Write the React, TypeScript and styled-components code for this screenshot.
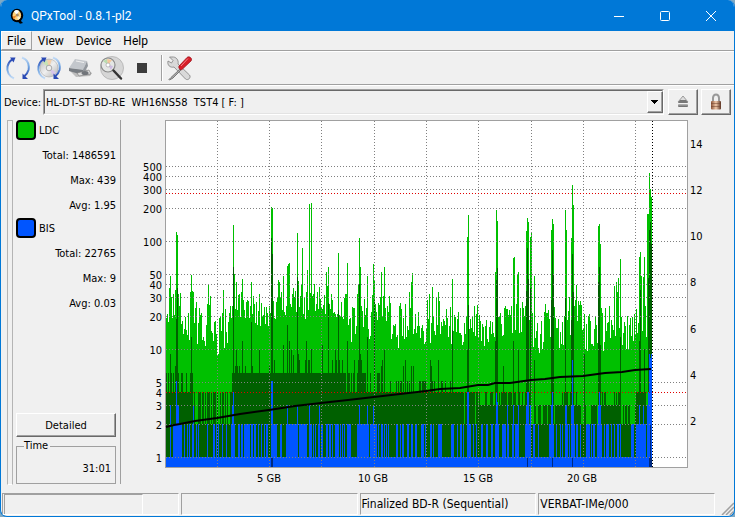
import React from "react";
import styled, { createGlobalStyle } from "styled-components";

const GlobalStyle = createGlobalStyle`
  * { box-sizing: border-box; }
  html, body { margin: 0; padding: 0; }
  body { background: #7fa9c4; font-family: "DejaVu Sans Condensed", "DejaVu Sans", sans-serif; font-size: 11px; color: #000; }
  button, select { font: inherit; color: inherit; }
`;

const Window = styled.div`
  display: flex;
  flex-direction: column;
  min-height: 100vh;
  background: #f0f0f0;
  border: 1px solid #0078d7;
  border-top: 0;
  border-radius: 7px;
  overflow: hidden;
`;

const TitleBar = styled.header`
  display: flex;
  align-items: center;
  height: 31px;
  padding-left: 7px;
  background: #0078d7;
  color: #fff;
`;

const Title = styled.h1`
  flex: 1;
  margin: 0 0 0 5px;
  font: 400 12px/16px Roboto, sans-serif;
`;

const CaptionButton = styled.button`
  display: grid;
  place-items: center;
  width: 46px;
  height: 30px;
  padding: 0;
  border: 0;
  background: transparent;
  color: #fff;
`;

const MenuBar = styled.nav`
  display: flex;
  height: 21px;
  border-bottom: 1px solid #fff;
  box-shadow: inset 0 -1px #a0a0a0;
`;

const MenuItem = styled.button<{ $active?: boolean }>`
  height: 19px;
  padding: 0 5px;
  border: 1px solid transparent;
  border-color: ${(p) => (p.$active ? "#fff #a0a0a0 #a0a0a0 #fff" : "transparent")};
  background: transparent;
  font: 12px/16px Roboto, sans-serif;
`;

const ToolBar = styled.div`
  display: flex;
  align-items: center;
  height: 33px;
  gap: 3px;
  padding: 0 3px;
  border-bottom: 1px solid #a0a0a0;
`;

const ToolButton = styled.button`
  display: grid;
  place-items: center;
  width: 28px;
  height: 28px;
  padding: 0;
  border: 0;
  background: transparent;
`;

const Separator = styled.span`
  width: 2px;
  height: 26px;
  margin-left: 2px;
  background: #a0a0a0;
  border-right: 1px solid #fff;
`;

const DeviceRow = styled.div`
  display: flex;
  height: 34px;
  padding: 3px 3px 4px;
  align-items: stretch;
  gap: 3px;
  border-top: 1px solid #fff;
`;

const DeviceLabel = styled.label`
  width: 36px;
  align-self: center;
  white-space: nowrap;
`;

const SelectFrame = styled.div`
  position: relative;
  flex: 1;
  min-width: 0;
  margin-right: 1px;
  border: 1px solid #a0a0a0;
  border-right-color: #fff;
  border-bottom-color: #fff;
`;

const DeviceSelect = styled.select`
  width: 100%;
  height: 100%;
  appearance: none;
  border: 1px solid #696969;
  border-right-color: #e3e3e3;
  border-bottom-color: #e3e3e3;
  border-radius: 0;
  padding: 0 20px 0 1px;
  background: #f0f0f0;
`;

const DropArrow = styled.span`
  position: absolute;
  right: 0;
  top: 1px;
  bottom: 1px;
  width: 16px;
  display: grid;
  place-items: center;
  pointer-events: none;
  background: #f0f0f0;
  border: 1px solid #fff;
  border-right-color: #696969;
  border-bottom-color: #696969;
  box-shadow: inset -1px -1px #a0a0a0;
`;

const RaisedButton = styled.button<{ $width?: number }>`
  display: grid;
  place-items: center;
  width: ${(p) => (p.$width ? p.$width + "px" : "100%")};
  min-height: 24px;
  padding: 0;
  border: 1px solid #fff;
  border-right-color: #696969;
  border-bottom-color: #696969;
  box-shadow: inset -1px -1px #a0a0a0;
  background: #f0f0f0;
`;

const Main = styled.main`
  display: flex;
  flex: 1;
  min-height: 0;
`;

const Splitter = styled.div`
  width: 6px;
  margin: 1px 3px 2px 6px;
  border: 1px solid #b4b4b4;
  border-bottom-color: #fff;
`;

const SidePanel = styled.aside`
  display: flex;
  flex-direction: column;
  width: 105px;
  padding-right: 4px;
  margin: 1px 0 3px;
  border-right: 1px solid #a0a0a0;
`;

const Legend = styled.h2`
  display: flex;
  align-items: center;
  gap: 3px;
  height: 23px;
  margin: 0;
  padding-bottom: 3px;
  font-size: 11px;
  font-weight: 400;
`;

const Swatch = styled.span<{ $color: string }>`
  width: 20px;
  height: 20px;
  border: 2px solid #000;
  border-radius: 4px;
  background: ${(p) => p.$color};
`;

const Stat = styled.div`
  height: 25px;
  line-height: 25px;
  text-align: right;
`;

const Spacer = styled.div`
  flex: 1;
`;

const TimeBox = styled.fieldset`
  height: 45px;
  margin: 2px 0 0;
  padding: 9px 4px 0 7px;
  border: 1px solid #a0a0a0;

  legend {
    padding: 0 2px 0 0;
    line-height: 14px;
  }
`;

const TimeValue = styled.div`
  text-align: right;
`;

const ChartArea = styled.section`
  flex: 1;
  min-width: 0;
  display: flex;

  svg {
    display: block;
    width: 100%;
    height: 100%;
  }
`;

const StatusBar = styled.footer`
  display: grid;
  grid-template-columns: repeat(4, 1fr) 17px;
  column-gap: 2px;
  height: 29px;
  padding: 6px 0 1px 1px;
  font-size: 12px;
`;

const StatusCell = styled.div`
  display: flex;
  align-items: center;
  min-width: 0;
  padding-left: 1px;
  white-space: nowrap;
  border: 1px solid #a0a0a0;
  border-right-color: #fff;
  border-bottom-color: #fff;
`;

const StatusProgress = styled.div`
  align-self: stretch;
  width: 80%;
  border: 1px solid #a0a0a0;
  border-right-color: #fff;
  border-bottom: 0;
`;

const Grip = styled.svg`
  align-self: end;
  justify-self: end;
`;

/* ---------- chart data ---------- */

const LEFT = 166;
const END = 652;
const BOTTOM = 467;
const yOf = (v: number) => Math.round(457 - 108 * Math.log10(v));

type Peaks = Record<number, number>;

const ldcPeaks: Peaks = {
  169: 288, 170: 276, 175: 290, 176: 232, 177: 235, 178: 294, 190: 292, 191: 275, 208: 285, 223: 290,
  233: 225, 234: 274, 236: 282, 239: 294, 241: 292, 242: 279, 251: 282, 259: 294, 271: 207, 272: 208,
  278: 280, 279: 282, 281: 292, 283: 276, 287: 266, 288: 264, 289: 263, 293: 288, 295: 291, 297: 233,
  298: 281, 301: 285, 302: 248, 306: 292, 307: 270, 309: 204, 311: 203, 313: 294, 314: 284, 319: 287,
  326: 272, 327: 286, 328: 267, 338: 253, 347: 263, 357: 294, 358: 284, 359: 238, 360: 267, 367: 276,
  373: 264, 374: 281, 381: 272, 384: 267, 409: 292, 411: 282, 412: 273, 432: 287, 438: 292, 452: 279,
  467: 237, 468: 215, 495: 272, 496: 210, 497: 221, 513: 258, 514: 257, 517: 274, 518: 272, 526: 231,
  527: 218, 528: 222, 530: 237, 531: 233, 534: 276, 551: 230, 552: 219, 553: 224, 565: 210, 566: 230,
  571: 238, 572: 185, 573: 205, 576: 285, 598: 226, 599: 224, 600: 244, 614: 286, 616: 282, 617: 292,
  618: 278, 620: 259, 639: 257, 640: 252, 641: 276, 643: 277, 644: 257, 648: 214, 649: 173, 650: 189,
  651: 197,
};

const darkPeaks: Peaks = {
  170: 354, 175: 366, 176: 319, 177: 288, 191: 337, 233: 267, 236: 350, 242: 341, 251: 322, 259: 350,
  271: 238, 272: 254, 283: 345, 287: 325, 289: 341, 291: 350, 293: 355, 297: 277, 298: 354, 306: 341,
  311: 349, 322: 345, 328: 303, 338: 310, 335: 350, 347: 341, 336: 360, 354: 360, 358: 360, 359: 284, 360: 354, 361: 360,
  367: 337, 374: 300, 381: 366, 382: 360, 384: 350, 403: 366, 405: 360, 411: 366, 413: 366, 430: 360, 431: 366, 438: 360,
  452: 330, 467: 350, 468: 305, 495: 341, 496: 280, 497: 268, 503: 366, 513: 341, 518: 350, 526: 291,
  527: 248, 528: 279, 530: 288, 534: 360, 551: 300, 552: 250, 553: 275, 565: 298, 571: 320, 572: 254, 573: 292,
  584: 354, 598: 282, 599: 267, 600: 345, 620: 337, 639: 341, 640: 290, 644: 349, 648: 278, 649: 230, 650: 222, 651: 244,
};

const bisPeaks: Peaks = {
  170: 405, 176: 381, 177: 405, 178: 405, 193: 405, 232: 405, 233: 392, 271: 381, 272: 381, 287: 405,
  297: 405, 309: 405, 319: 405, 359: 405, 367: 405, 373: 405, 467: 392, 468: 392, 496: 392, 497: 402,
  507: 405, 513: 405, 518: 405, 526: 405, 527: 392, 528: 392, 530: 405, 551: 405, 552: 392, 565: 405, 566: 405,
  571: 405, 572: 360, 573: 405, 598: 405, 599: 392, 600: 405, 639: 405, 643: 405, 647: 405, 648: 392,
  649: 354, 650: 358, 651: 354,
};

const bisRuns: [number, number][] = [
  [170, 170], [173, 181], [184, 184], [187, 187], [189, 189], [192, 193], [196, 196], [198, 198], [207, 207],
  [213, 214], [216, 216], [218, 218], [222, 222], [226, 226], [231, 234], [238, 239], [241, 242], [244, 249], [251, 252],
  [254, 255], [258, 258], [261, 261], [264, 264], [266, 267], [271, 276], [280, 281], [286, 296], [299, 306], [309, 311],
  [313, 313], [315, 315], [318, 319], [321, 322], [326, 327], [329, 330], [332, 332], [335, 338], [340, 340], [342, 342],
  [344, 344], [347, 350], [357, 368], [370, 376], [378, 378], [381, 382], [384, 384], [386, 386], [388, 388], [396, 397],
  [400, 400], [402, 403], [407, 408], [411, 412], [415, 416], [421, 423], [425, 425], [430, 431], [433, 433], [438, 441],
  [451, 453], [457, 457], [460, 461], [463, 463], [467, 470], [473, 473], [476, 476], [481, 482], [486, 487], [491, 492],
  [495, 498], [502, 505], [507, 508], [512, 513], [515, 518], [525, 530], [533, 534], [538, 538], [549, 550], [552, 553],
  [556, 556], [560, 560], [562, 562], [565, 567], [569, 569], [571, 574], [576, 577], [580, 580], [586, 589], [591, 591],
  [593, 594], [597, 601], [604, 604], [606, 608], [611, 611], [614, 614], [617, 618], [620, 620], [631, 633], [636, 645], [647, 651],
];

// [last column, highest usual top, lowest usual top]
const ldcBands: [number, number, number][] = [
  [169, 312, 336], [180, 292, 318], [190, 308, 342], [196, 290, 324], [204, 306, 350], [212, 296, 350], [220, 308, 362], [231, 304, 350],
  [250, 294, 318], [270, 295, 327], [300, 292, 319], [325, 292, 319], [345, 292, 320], [358, 292, 350], [374, 294, 348],
  [390, 294, 325], [398, 322, 349], [412, 298, 342], [424, 308, 350], [436, 294, 345], [450, 300, 340],
  [466, 306, 346], [480, 302, 340], [494, 318, 354], [510, 304, 338], [526, 299, 336], [545, 300, 354],
  [566, 304, 354], [584, 294, 336], [604, 306, 352], [616, 302, 360], [634, 312, 352], [646, 304, 338], [651, 210, 240],
];

// [last column, usual top, alternate top, share of the alternate]
const darkBands: [number, number, number, number][] = [
  [176, 373, 392, 0.5], [192, 392, 373, 0.3], [212, 392, 424, 0.5], [231, 392, 424, 0.45], [270, 373, 366, 0.2],
  [345, 373, 360, 0.2], [365, 373, 392, 0.3], [380, 392, 373, 0.4], [420, 392, 381, 0.2], [450, 392, 381, 0.3],
  [463, 392, 392, 0], [476, 392, 424, 0.3], [500, 392, 405, 0.5], [516, 392, 405, 0.3], [530, 405, 392, 0.4],
  [560, 405, 424, 0.4], [580, 392, 405, 0.5], [599, 405, 424, 0.6], [619, 392, 405, 0.5], [634, 405, 424, 0.5],
  [647, 392, 405, 0.25], [651, 280, 280, 0],
];

const noise = (n: number) => {
  const s = Math.sin(n * 127.1 + 11.7) * 43758.5453;
  return s - Math.floor(s);
};

const columns = Array.from({ length: END - LEFT }, (_, i) => LEFT + i);

const ldcTop = (x: number) => {
  if (ldcPeaks[x]) return ldcPeaks[x];
  const [, hi, lo] = ldcBands.find((b) => x <= b[0])!;
  return Math.round(lo - (lo - hi) * noise(x));
};

const darkTop = (x: number) => {
  if (darkPeaks[x]) return darkPeaks[x];
  const [, usual, other, share] = darkBands.find((b) => x <= b[0])!;
  return noise(x + 900) < share ? other : usual;
};

const bisTop = (x: number) => {
  if (bisPeaks[x]) return bisPeaks[x];
  return bisRuns.some(([a, b]) => x >= a && x <= b) ? 424 : 457;
};

const bars = (top: (x: number) => number) => columns.map((x) => `M${x} ${BOTTOM}V${top(x)}h1V${BOTTOM}z`).join("");

const levels = [500, 400, 300, 200, 100, 50, 40, 30, 20, 10, 5, 4, 3, 2, 1];
const verticals = [217, 269, 321, 374, 426, 478, 531, 583, 635];
const sizes: [string, number][] = [["5 GB", 269], ["10 GB", 373], ["15 GB", 478], ["20 GB", 582]];
const speeds: [number, number][] = [[14, 144], [12, 190], [10, 236], [8, 282], [6, 329], [4, 375], [2, 421]];

const speedLine =
  "166,427 174,425 180,424 195,421 217,418 240,414 269,410 295,406 321,403 348,400 374,397 400,394 426,391 440,389 460,388 478,385 488,385 495,383 510,383 531,380 545,379 560,377 583,376 605,373 622,372 635,370 651,369";

function Chart() {
  return (
    <svg viewBox="121 119 613 368" role="img" aria-label="LDC and BIS error rates by disc position" fontSize="11">
      <g shapeRendering="crispEdges">
        <rect x="165" y="120" width="523" height="348" fill="#a0a0a0" />
        <rect x="166" y="121" width="521" height="346" fill="#fff" />
        <path d={bars(ldcTop)} fill="#00c000" />
        <path d={bars(darkTop)} fill="#006000" />
        <path d={bars(bisTop)} fill="#0055ff" />
        <path d="M271 458h2v9h-2zM527 458h1v9h-1zM552 458h1v9h-1zM572 458h1v9h-1zM649 458h3v9h-3zM650 425h1v33h-1z" fill="#002a80" />
        <g stroke="#808080" strokeDasharray="1 2">
          {levels.map((v) => (
            <path key={v} d={`M166 ${yOf(v) + 0.5}H687`} />
          ))}
          {verticals.map((x) => (
            <path key={x} d={`M${x + 0.5} 121V467`} />
          ))}
        </g>
        <path d="M166 193.5H687M166 392.5H687" stroke="#e00000" strokeDasharray="1 2" />
        <path d="M652.5 121V467" stroke="#000" strokeDasharray="1 2" />
      </g>
      <polyline points={speedLine} fill="none" stroke="#000" strokeWidth="2" />
      <g textAnchor="end">
        {levels.map((v) => (
          <text key={v} x="162" y={yOf(v) + 5}>{v}</text>
        ))}
      </g>
      <g textAnchor="middle">
        {sizes.map(([label, x]) => (
          <text key={label} x={x} y="482">{label}</text>
        ))}
      </g>
      {speeds.map(([v, y]) => (
        <text key={v} x="690" y={y + 4}>{v}</text>
      ))}
    </svg>
  );
}

/* ---------- icons ---------- */

const AppIcon = () => (
  <svg width="18" height="18" viewBox="0 0 18 18" aria-hidden="true">
    <ellipse cx="9" cy="8.5" rx="6.2" ry="6.8" fill="#000" />
    <path d="M10 11l5 5-3 .8-4-4z" fill="#000" />
    <ellipse cx="8.8" cy="8.2" rx="4.3" ry="5" fill="#ffd27a" />
    <path d="M8.8 8.2L6 4.2a4.3 5 0 0 1 5 -.3z" fill="#fff" />
    <path d="M8.8 8.2l-3 4.2a4.3 5 0 0 1-1.2-3z" fill="#f28b2c" />
    <path d="M8.8 8.2l3.8 2.4a4.3 5 0 0 1-2.6 2.4z" fill="#fff4d0" />
    <circle cx="9.4" cy="8" r="1.5" fill="#a88a68" />
  </svg>
);

const Arrows = () => (
  <g fill="none" strokeWidth="2">
    <path d="M9 23.500C4 21.500 1.500 16.500 2.500 11.500Q3.500 7 7 4.500" stroke="url(#arcA)" />
    <path d="M17 2.500c5.500 2 7.500 7 6.500 12.500q-1 3.500-4 6" stroke="url(#arcB)" />
    <path d="M5 2.500h5.500l-2 5z" fill="#2a49b4" stroke="none" />
    <path d="M17.500 18.500v5.500h5.500z" fill="#2a49b4" stroke="none" />
  </g>
);

const Disc = ({ r = 9 }: { r?: number }) => (
  <>
    <circle cx="13" cy="13" r={r} fill="url(#disc)" stroke="#aaa" strokeWidth=".6" />
    <path d={`M13 13L${13 - r * 0.7} ${13 - r * 0.6}L${13 - r * 0.2} ${13 - r * 0.9}z`} fill="#c6e3b4" />
    <path d={`M13 13L${13 - r * 0.2} ${13 - r * 0.9}L${13 + r * 0.3} ${13 - r * 0.9}z`} fill="#f3cfa8" />
    <path d={`M13 13L${13 + r * 0.8} ${13 + r * 0.5}L${13 + r * 0.4} ${13 + r * 0.8}z`} fill="#d7c5ea" />
    <circle cx="13" cy="13" r="2.800" fill="#eee" stroke="#999" strokeWidth=".8" />
  </>
);

const Gradients = () => (
  <svg width="0" height="0" aria-hidden="true">
    <defs>
      <linearGradient id="arcA" x1="0" y1="1" x2="0" y2="0">
        <stop offset="0" stopColor="#c4dcf6" /><stop offset=".5" stopColor="#6ea2e0" /><stop offset="1" stopColor="#2a49b4" />
      </linearGradient>
      <linearGradient id="arcB" x1="0" y1="0" x2="0" y2="1">
        <stop offset="0" stopColor="#c4dcf6" /><stop offset=".5" stopColor="#6ea2e0" /><stop offset="1" stopColor="#2a49b4" />
      </linearGradient>
      <linearGradient id="disc" x1="0" y1="0" x2="1" y2="1">
        <stop offset="0" stopColor="#b8b8b8" /><stop offset=".5" stopColor="#efefef" /><stop offset="1" stopColor="#b0b0b0" />
      </linearGradient>
      <linearGradient id="brass" x1="0" y1="0" x2="1" y2="0">
        <stop offset="0" stopColor="#8a5236" /><stop offset=".5" stopColor="#f0c8a8" /><stop offset="1" stopColor="#5c3424" />
      </linearGradient>
      <linearGradient id="steel" x1="0" y1="0" x2="0" y2="1">
        <stop offset="0" stopColor="#bbb" /><stop offset="1" stopColor="#666" />
      </linearGradient>
    </defs>
  </svg>
);

const HiddenDefs = styled.div`
  position: absolute;
  width: 0;
  height: 0;
  overflow: hidden;
`;

const Icon = ({ children }: { children: React.ReactNode }) => (
  <svg width="26" height="26" viewBox="0 0 26 26" aria-hidden="true">{children}</svg>
);

export default function App() {
  return (
    <>
      <GlobalStyle />
      <HiddenDefs><Gradients /></HiddenDefs>
      <Window>
        <TitleBar>
          <AppIcon />
          <Title>QPxTool - 0.8.1-pl2</Title>
          <CaptionButton aria-label="Minimize">
            <svg width="10" height="10"><path d="M0 5.500h10" stroke="currentColor" /></svg>
          </CaptionButton>
          <CaptionButton aria-label="Maximize">
            <svg width="10" height="10"><rect x=".5" y=".5" width="9" height="9" rx="1" fill="none" stroke="currentColor" /></svg>
          </CaptionButton>
          <CaptionButton aria-label="Close">
            <svg width="10" height="10"><path d="M0 0l10 10M10 0L0 10" stroke="currentColor" /></svg>
          </CaptionButton>
        </TitleBar>

        <MenuBar>
          <MenuItem $active>File</MenuItem>
          <MenuItem>View</MenuItem>
          <MenuItem>Device</MenuItem>
          <MenuItem>Help</MenuItem>
        </MenuBar>

        <ToolBar role="toolbar">
          <ToolButton aria-label="Rescan bus"><Icon><Arrows /></Icon></ToolButton>
          <ToolButton aria-label="Update media info"><Icon><Disc r={9} /><Arrows /></Icon></ToolButton>
          <ToolButton aria-label="Device info">
            <Icon>
              <path d="M2 15l7 7 14-1 2-3-8-5z" fill="#bdbdbd" />
              <path d="M2 13L8 4l12 2-4 9z" fill="#c3c7cc" />
              <path d="M2 13l14 2v5L2 16z" fill="#777c82" />
              <path d="M20 6l-4 9v5l5-9z" fill="#92979d" />
              <path d="M10 18l12-3 2 4-12 2z" fill="#dcdcdc" stroke="#777" strokeWidth=".6" />
              <ellipse cx="18" cy="18" rx="3.500" ry="2" fill="#71757a" />
              <path d="M9 6l8 1.500" stroke="#f0f0f0" />
            </Icon>
          </ToolButton>
          <ToolButton aria-label="Scan media">
            <Icon>
              <circle cx="14" cy="13" r="11.500" fill="#d6d6d6" stroke="#b0b0b0" strokeWidth=".8" />
              <circle cx="10" cy="10" r="7" fill="#e4e6e4" stroke="#8a8a8a" strokeWidth="1.200" />
              <path d="M10 10L5 6l4-2z" fill="#b9dcae" />
              <path d="M10 10L9 4l5 1z" fill="#f3c79a" />
              <path d="M10 10l5 1-2 4z" fill="#cdbce2" />
              <circle cx="10" cy="10" r="2" fill="#fff" stroke="#999" strokeWidth=".6" />
              <path d="M15.500 15.500l7.500 8" stroke="#333" strokeWidth="2.500" strokeLinecap="round" />
            </Icon>
          </ToolButton>
          <ToolButton aria-label="Stop"><Icon><path d="M8 8h10v10H8z" fill="#3c3c3c" /></Icon></ToolButton>
          <Separator />
          <ToolButton aria-label="Preferences">
            <Icon>
              <path d="M2.500 2L6 5.500 4.500 8 1 6c-1 4 2 7 6 6l11.500 12c2.500 2 6-1.500 4-4L11 9c1-4-2-7.500-6-7z" fill="#d9d9d9" stroke="#808080" strokeWidth=".8" />
              <path d="M13 14l-9 8.500-2 2 .5.500L6 23l8-8z" fill="#aaa" stroke="#777" strokeWidth="1" />
              <path d="M12 11L20 2.500c2-2 6 1 4 3.500l-9 8.500c-1.500 1-4-1.500-3-3.500z" fill="#d81e28" stroke="#971018" strokeWidth=".7" />
              <path d="M14 11l7-7.500" stroke="#f3828a" />
            </Icon>
          </ToolButton>
        </ToolBar>

        <DeviceRow>
          <DeviceLabel htmlFor="device">Device:</DeviceLabel>
          <SelectFrame>
            <DeviceSelect id="device">
              <option>{"HL-DT-ST BD-RE \u00a0WH16NS58 \u00a0TST4 [ F: ]"}</option>
            </DeviceSelect>
            <DropArrow><svg width="8" height="4" shapeRendering="crispEdges"><path d="M0 0h7v1H0zM1 1h5v1H1zM2 2h3v1H2zM3 3h1v1H3z" /></svg></DropArrow>
          </SelectFrame>
          <RaisedButton $width={30} aria-label="Eject">
            <svg width="14" height="16" viewBox="0 0 14 16">
              <path d="M7 2l5 6H2z" fill="#ddd" stroke="#888" strokeWidth=".8" />
              <path d="M4 6h6l2 3H2z" fill="#777" />
              <rect x="2" y="10" width="10" height="3" rx="1" fill="url(#steel)" />
            </svg>
          </RaisedButton>
          <RaisedButton $width={30} aria-label="Lock">
            <svg width="14" height="18" viewBox="0 0 14 18">
              <path d="M4 9V5a3 3.500 0 0 1 6 0v4" fill="none" stroke="#999" strokeWidth="2" />
              <rect x="2" y="8" width="10" height="8.500" rx="1" fill="url(#brass)" />
              <path d="M2 10.500h10M2 13.500h10" stroke="#6a3c28" strokeWidth=".5" />
            </svg>
          </RaisedButton>
        </DeviceRow>

        <Main>
          <Splitter />
          <SidePanel>
            <Legend><Swatch $color="#00c000" />LDC</Legend>
            <Stat>Total: 1486591</Stat>
            <Stat>Max: 439</Stat>
            <Stat>Avg: 1.95</Stat>
            <Legend><Swatch $color="#0055ff" />BIS</Legend>
            <Stat>Total: 22765</Stat>
            <Stat>Max: 9</Stat>
            <Stat>Avg: 0.03</Stat>
            <Spacer />
            <RaisedButton>Detailed</RaisedButton>
            <TimeBox><legend>Time</legend><TimeValue>31:01</TimeValue></TimeBox>
          </SidePanel>
          <ChartArea><Chart /></ChartArea>
        </Main>

        <StatusBar>
          <StatusCell><StatusProgress /></StatusCell>
          <StatusCell />
          <StatusCell>Finalized BD-R (Sequential)</StatusCell>
          <StatusCell>VERBAT-IMe/000</StatusCell>
          <Grip width="13" height="13" aria-hidden="true">
            <path d="M1 13L13 1M5 13l8-8M9 13l4-4" stroke="#a0a0a0" strokeWidth="1.500" />
          </Grip>
        </StatusBar>
      </Window>
    </>
  );
}
